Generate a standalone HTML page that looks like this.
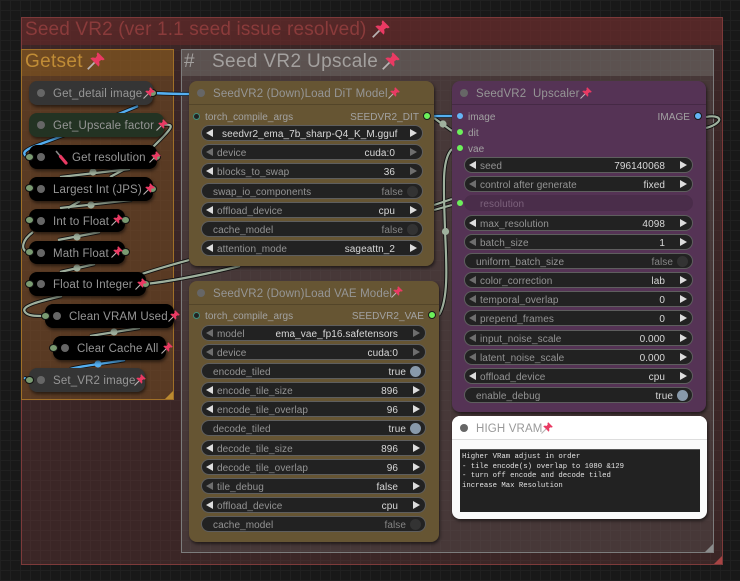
<!DOCTYPE html>
<html><head><meta charset="utf-8"><style>
html,body{margin:0;padding:0;background:#181818}
#p{position:relative;width:740px;height:581px;overflow:hidden;font-family:"Liberation Sans",sans-serif;background-color:#181818;background-image:linear-gradient(#202020 1px,transparent 1px),linear-gradient(90deg,#202020 1px,transparent 1px);background-size:10px 10px}
.a{position:absolute;box-sizing:border-box;white-space:pre}
.gt{position:absolute;font-size:19px;line-height:24px;white-space:pre}
.n{position:absolute;box-sizing:border-box;border-radius:8px;box-shadow:1px 2px 3px rgba(0,0,0,.55)}
.h{position:absolute;left:0;right:0;top:0;height:24px;border-bottom:1px solid rgba(0,0,0,.18);box-sizing:border-box}
.t{position:absolute;font-size:11.5px;line-height:14px;color:#969696;white-space:pre;letter-spacing:.15px;margin-top:1px}
.d{position:absolute;width:8px;height:8px;border-radius:50%;background:#666}
.s{position:absolute;width:9px;height:8px;border-radius:50%;background:#7a9b72;border:1px solid #111;box-sizing:border-box;z-index:5}
.o{position:absolute;width:8px;height:8px;border-radius:50%;box-sizing:border-box;border:1px solid #1a1a1a;z-index:5}
.lb{position:absolute;font-size:10px;line-height:13px;color:#a2a2a2;white-space:pre;letter-spacing:.05px;margin-top:1px}
.c{position:absolute;height:0;top:0}
.w{position:absolute;left:0;right:0;height:16px;box-sizing:border-box;border:1px solid #5e5e5e;border-radius:8px;background:#222;font-size:10px;line-height:15px;letter-spacing:.08px}
.w b{position:absolute;left:15px;top:1px;font-weight:normal;color:#949494;white-space:pre}
.w.g b{left:11px}
.w u{position:absolute;right:27px;top:1px;text-decoration:none;color:#d8d8d8;white-space:pre}
.w.g u{right:19px;color:#d8d8d8}
.w.g.f u{color:#858585}
.w i{position:absolute;top:3px;width:0;height:0;border-top:4px solid transparent;border-bottom:4px solid transparent}
.w i.l{left:4px;border-right:7px solid #ddd}
.w i.r{right:5px;border-left:7px solid #ddd}
.w i.l.m{border-right-color:#6e6e6e}
.w i.r.m{border-left-color:#6e6e6e}
.w em{position:absolute;right:4.5px;top:1.5px;width:11px;height:11px;border-radius:50%;background:#89a}
.w.f em{background:#333}
.pin{position:absolute;z-index:6}
</style></head><body><div id="p">
<svg width="0" height="0" style="position:absolute"><symbol id="pn" viewBox="0 0 24 24"><path d="M1 23L10 14" stroke="#b9b3b3" stroke-width="2.2" fill="none"/><path d="M14.500 .5C13 1.500 12.500 3.500 13.500 5L11 8C9 7 6.500 7 4.500 8.500L15.500 19.500C17 17.500 17 15 16 13L19 10.500C20.500 11.500 22.500 11 23.500 9.500Z" fill="#e93a63"/></symbol></svg>

<!-- groups -->
<div class="a" style="left:21px;top:17px;width:702px;height:548px;background:rgba(110,60,60,.42);border:1px solid #7d3a3a"></div>
<div class="a" style="left:22px;top:18px;width:700px;height:27px;background:rgba(110,40,40,.5)"></div>
<div class="gt" style="left:25px;top:18px;color:#8a3b3b;letter-spacing:.15px">Seed VR2 (ver 1.1 seed issue resolved)</div>
<svg class="pin" style="left:372px;top:20px" width="18" height="18"><use href="#pn"/></svg>
<div class="a" style="left:714px;top:556px;width:0;height:0;border-left:8px solid transparent;border-bottom:8px solid #a84444"></div>

<div class="a" style="left:21px;top:49px;width:153px;height:351px;background:rgba(130,85,30,.42);border:1px solid #a07028"></div>
<div class="a" style="left:22px;top:50px;width:151px;height:26px;background:rgba(160,105,30,.32)"></div>
<div class="gt" style="left:25px;top:50px;color:#c08c36;letter-spacing:.3px">Getset</div>
<svg class="pin" style="left:87px;top:52px" width="18" height="18"><use href="#pn"/></svg>
<div class="a" style="left:165px;top:391px;width:0;height:0;border-left:8px solid transparent;border-bottom:8px solid #bb8a30"></div>

<div class="a" style="left:181px;top:49px;width:533px;height:504px;background:rgba(100,100,100,.3);border:1px solid #7c7c7c"></div>
<div class="a" style="left:182px;top:50px;width:531px;height:26px;background:rgba(125,125,120,.38)"></div>
<div class="gt" style="left:184px;top:50px;color:#a3a09e;letter-spacing:.1px">#</div>
<div class="gt" style="left:212px;top:50px;color:#a3a09e;letter-spacing:.35px">Seed VR2 Upscale</div>
<svg class="pin" style="left:382px;top:52px" width="18" height="18"><use href="#pn"/></svg>
<div class="a" style="left:705px;top:544px;width:0;height:0;border-left:8px solid transparent;border-bottom:8px solid #8c8c8c"></div>

<!-- wires -->
<svg class="a" style="left:0;top:0" width="740" height="581" fill="none">
<g stroke="#111" stroke-width="4">
<path d="M152 93C175 94 175 94 189 94"/>
<path d="M138 106C100 122 60 137 35 146C25 150 22 153 26 156"/>
<path d="M70 369C85 365 110 363 125 360"/><path d="M28 379L24 378"/>
<path d="M434 116H452"/>
<path d="M434 118L452 131"/>
<path d="M163 125C178 123 170 130 150 150"/>
<path d="M130 169L60 177"/><path d="M125 169L110 177"/>
<path d="M132 200L60 208"/><path d="M80 201L68 208"/>
<path d="M100 232L58 240"/><path d="M33 232C22 240 20 250 28 252"/>
<path d="M95 264L60 272"/>
<path d="M142 274C160 268 175 264 189 260M145 284C175 281 215 272 240 266"/>
<path d="M434 205L452 199M434 210L452 205"/>
<path d="M62 296C40 301 20 306 25 312C28 316 35 316 45 316"/>
<path d="M140 328L90 336"/>
<path d="M439 315C448 300 447 270 445 231C444 190 441 160 452 149"/>
<path d="M706 117C716 115 722 118 718 122C715 125 710 127 706 128"/>
</g>
<g stroke="#9fb09d" stroke-width="2.2">
<path d="M434 118L452 131"/>
<path d="M163 125C178 123 170 130 150 150"/>
<path d="M130 169L60 177"/><path d="M125 169L110 177"/>
<path d="M132 200L60 208"/><path d="M80 201L68 208"/>
<path d="M100 232L58 240"/><path d="M33 232C22 240 20 250 28 252"/>
<path d="M95 264L60 272"/>
<path d="M142 274C160 268 175 264 189 260M145 284C175 281 215 272 240 266"/>
<path d="M434 205L452 199M434 210L452 205"/>
<path d="M62 296C40 301 20 306 25 312C28 316 35 316 45 316"/>
<path d="M140 328L90 336"/>
<path d="M439 315C448 300 447 270 445 231C444 190 441 160 452 149"/>
<path d="M706 117C716 115 722 118 718 122C715 125 710 127 706 128"/>
</g>
<g stroke="#55b0f2" stroke-width="2.4">
<path d="M152 93C175 94 175 94 189 94"/>
<path d="M138 106C100 122 60 137 35 146C25 150 22 153 26 156"/>
<path d="M70 369C85 365 110 363 125 360"/><path d="M28 379L24 378"/>
<path d="M434 116H452"/>
</g>
<g fill="#9fb09d"><circle cx="93" cy="172" r="3.6"/><circle cx="91" cy="205" r="3.6"/><circle cx="77" cy="237" r="3.6"/><circle cx="77" cy="268" r="3.6"/><circle cx="114" cy="332" r="3.6"/><circle cx="443" cy="124" r="3.6"/><circle cx="445.500" cy="231.500" r="3.6"/></g>
<circle cx="98" cy="364" r="3.6" fill="#55b0f2"/>
</svg>

<!-- left nodes -->
<div class="n" style="left:29px;top:81px;width:124px;height:24px;background:#353535"><div class="d" style="left:8px;top:8px"></div><div class="t" style="left:24px;top:5px">Get_detail image</div></div>
<svg class="pin" style="left:143px;top:87px" width="12" height="12"><use href="#pn"/></svg><div class="s" style="left:148px;top:89px"></div>

<div class="n" style="left:29px;top:113px;width:135px;height:24px;background:#233323"><div class="d" style="left:8px;top:8px"></div><div class="t" style="left:24px;top:5px">Get_Upscale factor</div></div>
<svg class="pin" style="left:156px;top:119px" width="12" height="12"><use href="#pn"/></svg>

<div class="n" style="left:29px;top:145px;width:128px;height:24px;background:#000"><div class="d" style="left:8px;top:8px"></div><div class="t" style="left:43px;top:5px">Get resolution</div></div>
<svg class="a" style="left:55px;top:150px;z-index:4" width="13" height="15"><path d="M1 1L6 7" stroke="#888" stroke-width="1.6"/><path d="M5.500 6.500L11 13" stroke="#e93a63" stroke-width="3.2" stroke-linecap="round"/></svg>
<svg class="pin" style="left:149px;top:151px" width="12" height="12"><use href="#pn"/></svg><div class="s" style="left:25px;top:153px"></div><div class="s" style="left:152px;top:153px"></div>

<div class="n" style="left:29px;top:177px;width:124px;height:24px;background:#000"><div class="d" style="left:8px;top:8px"></div><div class="t" style="left:24px;top:5px">Largest Int (JPS)</div></div>
<svg class="pin" style="left:143px;top:183px" width="12" height="12"><use href="#pn"/></svg><div class="s" style="left:25px;top:184px"></div><div class="s" style="left:148px;top:185px"></div>

<div class="n" style="left:29px;top:209px;width:96px;height:23px;background:#000"><div class="d" style="left:8px;top:8px"></div><div class="t" style="left:24px;top:5px">Int to Float</div></div>
<svg class="pin" style="left:111px;top:214px" width="12" height="12"><use href="#pn"/></svg><div class="s" style="left:25px;top:216px"></div><div class="s" style="left:121px;top:216px"></div>

<div class="n" style="left:29px;top:241px;width:96px;height:23px;background:#000"><div class="d" style="left:8px;top:8px"></div><div class="t" style="left:24px;top:5px">Math Float</div></div>
<svg class="pin" style="left:111px;top:246px" width="12" height="12"><use href="#pn"/></svg><div class="s" style="left:25px;top:248px"></div><div class="s" style="left:121px;top:248px"></div>

<div class="n" style="left:29px;top:272px;width:117px;height:24px;background:#000"><div class="d" style="left:8px;top:8px"></div><div class="t" style="left:24px;top:5px">Float to Integer</div></div>
<svg class="pin" style="left:135px;top:278px" width="12" height="12"><use href="#pn"/></svg><div class="s" style="left:25px;top:280px"></div><div class="s" style="left:141px;top:280px"></div>

<div class="n" style="left:45px;top:304px;width:129px;height:24px;background:#000"><div class="d" style="left:8px;top:8px"></div><div class="t" style="left:24px;top:5px">Clean VRAM Used</div></div>
<svg class="pin" style="left:168px;top:310px" width="12" height="12"><use href="#pn"/></svg><div class="s" style="left:41px;top:312px"></div>

<div class="n" style="left:53px;top:336px;width:113px;height:24px;background:#000"><div class="d" style="left:8px;top:8px"></div><div class="t" style="left:24px;top:5px">Clear Cache All</div></div>
<svg class="pin" style="left:161px;top:342px" width="12" height="12"><use href="#pn"/></svg><div class="s" style="left:49px;top:344px"></div>

<div class="n" style="left:29px;top:368px;width:116px;height:24px;background:#353535"><div class="d" style="left:8px;top:8px"></div><div class="t" style="left:24px;top:5px">Set_VR2 image</div></div>
<svg class="pin" style="left:134px;top:374px" width="12" height="12"><use href="#pn"/></svg><div class="s" style="left:25px;top:376px"></div>

<!-- DiT node -->
<div class="n" style="left:189px;top:81px;width:245px;height:185px;background:#665533"><div class="h"></div><div class="d" style="left:8px;top:8px"></div><div class="t" style="left:24px;top:5px">SeedVR2 (Down)Load DiT Model</div></div>
<svg class="pin" style="left:388px;top:87px" width="12" height="12"><use href="#pn"/></svg>
<div class="o" style="left:193px;top:113px;background:#222;border:1.5px solid #3e8f7d;width:7px;height:7px"></div>
<div class="lb" style="left:205px;top:110px">torch_compile_args</div>
<div class="lb" style="right:321px;top:110px">SEEDVR2_DIT</div>
<div class="o" style="left:423px;top:112px;background:#6cf05a"></div>
<div class="c" style="left:201px;width:222px">
<div class="w" style="top:125px"><i class="l"></i><u style="left:20px;right:auto">seedvr2_ema_7b_sharp-Q4_K_M.gguf</u><i class="r"></i></div>
<div class="w" style="top:144px"><i class="l m"></i><b>device</b><u>cuda:0</u><i class="r m"></i></div>
<div class="w" style="top:163px"><i class="l"></i><b>blocks_to_swap</b><u>36</u><i class="r m"></i></div>
<div class="w g f" style="top:183px"><b>swap_io_components</b><u>false</u><em></em></div>
<div class="w" style="top:202px"><i class="l"></i><b>offload_device</b><u>cpu</u><i class="r"></i></div>
<div class="w g f" style="top:221px"><b>cache_model</b><u>false</u><em></em></div>
<div class="w" style="top:240px"><i class="l"></i><b>attention_mode</b><u>sageattn_2</u><i class="r"></i></div>
</div>

<!-- VAE node -->
<div class="n" style="left:189px;top:281px;width:250px;height:261px;background:#665533"><div class="h"></div><div class="d" style="left:8px;top:8px"></div><div class="t" style="left:24px;top:5px">SeedVR2 (Down)Load VAE Model</div></div>
<svg class="pin" style="left:391px;top:286px" width="12" height="12"><use href="#pn"/></svg>
<div class="o" style="left:193px;top:312px;background:#222;border:1.5px solid #3e8f7d;width:7px;height:7px"></div>
<div class="lb" style="left:205px;top:309px">torch_compile_args</div>
<div class="lb" style="right:316px;top:309px">SEEDVR2_VAE</div>
<div class="o" style="left:428px;top:311px;background:#6cf05a"></div>
<div class="c" style="left:201px;width:225px">
<div class="w" style="top:325px"><i class="l m"></i><b>model</b><u>ema_vae_fp16.safetensors</u><i class="r m"></i></div>
<div class="w" style="top:344px"><i class="l m"></i><b>device</b><u>cuda:0</u><i class="r m"></i></div>
<div class="w g" style="top:363px"><b>encode_tiled</b><u>true</u><em></em></div>
<div class="w" style="top:382px"><i class="l"></i><b>encode_tile_size</b><u>896</u><i class="r"></i></div>
<div class="w" style="top:401px"><i class="l"></i><b>encode_tile_overlap</b><u>96</u><i class="r"></i></div>
<div class="w g" style="top:420px"><b>decode_tiled</b><u>true</u><em></em></div>
<div class="w" style="top:440px"><i class="l"></i><b>decode_tile_size</b><u>896</u><i class="r"></i></div>
<div class="w" style="top:459px"><i class="l"></i><b>decode_tile_overlap</b><u>96</u><i class="r"></i></div>
<div class="w" style="top:478px"><i class="l m"></i><b>tile_debug</b><u>false</u><i class="r"></i></div>
<div class="w" style="top:497px"><i class="l"></i><b>offload_device</b><u>cpu</u><i class="r"></i></div>
<div class="w g f" style="top:516px"><b>cache_model</b><u>false</u><em></em></div>
</div>

<!-- Upscaler node -->
<div class="n" style="left:452px;top:81px;width:254px;height:331px;background:#553355"><div class="h"></div><div class="d" style="left:8px;top:8px"></div><div class="t" style="left:24px;top:5px">SeedVR2  Upscaler</div></div>
<svg class="pin" style="left:580px;top:87px" width="12" height="12"><use href="#pn"/></svg>
<div class="o" style="left:456px;top:112px;background:#64b5f6;border-color:#553355"></div>
<div class="lb" style="left:468px;top:110px">image</div>
<div class="o" style="left:456px;top:128px;background:#6cf05a;border-color:#553355"></div>
<div class="lb" style="left:468px;top:126px">dit</div>
<div class="o" style="left:456px;top:144px;background:#6cf05a;border-color:#553355"></div>
<div class="lb" style="left:468px;top:142px">vae</div>
<div class="lb" style="right:50px;top:110px">IMAGE</div>
<div class="o" style="left:694px;top:112px;background:#64b5f6"></div>
<div class="o" style="left:456px;top:199px;background:#6cf05a;border-color:#553355"></div>
<div class="c" style="left:464px;width:229px">
<div class="w" style="top:157px"><i class="l"></i><b>seed</b><u>796140068</u><i class="r"></i></div>
<div class="w" style="top:176px"><i class="l m"></i><b>control after generate</b><u>fixed</u><i class="r"></i></div>
<div class="w" style="top:195px;background:#4a2d4a;border-color:#4a2d4a"><b style="color:#7c627c">resolution</b></div>
<div class="w" style="top:215px"><i class="l"></i><b>max_resolution</b><u>4098</u><i class="r"></i></div>
<div class="w" style="top:234px"><i class="l m"></i><b>batch_size</b><u>1</u><i class="r"></i></div>
<div class="w g f" style="top:253px"><b>uniform_batch_size</b><u>false</u><em></em></div>
<div class="w" style="top:272px"><i class="l m"></i><b>color_correction</b><u>lab</u><i class="r"></i></div>
<div class="w" style="top:291px"><i class="l m"></i><b>temporal_overlap</b><u>0</u><i class="r"></i></div>
<div class="w" style="top:310px"><i class="l m"></i><b>prepend_frames</b><u>0</u><i class="r"></i></div>
<div class="w" style="top:330px"><i class="l m"></i><b>input_noise_scale</b><u>0.000</u><i class="r"></i></div>
<div class="w" style="top:349px"><i class="l m"></i><b>latent_noise_scale</b><u>0.000</u><i class="r"></i></div>
<div class="w" style="top:368px"><i class="l"></i><b>offload_device</b><u>cpu</u><i class="r"></i></div>
<div class="w g" style="top:387px"><b>enable_debug</b><u>true</u><em></em></div>
</div>

<!-- Note node -->
<div class="n" style="left:452px;top:416px;width:255px;height:103px;background:#fafafa"><div class="h" style="background:#fff;border-radius:8px 8px 0 0;border-bottom:1px solid #ddd"></div><div class="d" style="left:8px;top:8px;background:#666"></div><div class="t" style="left:24px;top:5px;color:#999">HIGH VRAM</div></div>
<svg class="pin" style="left:541px;top:422px" width="12" height="12"><use href="#pn"/></svg>
<div class="a" style="left:460px;top:449px;width:240px;height:63px;background:#222;border-top:1px solid #555;padding:3px 2px;font:7.3px/9.6px 'Liberation Mono',monospace;color:#e2e2e2">Higher VRam adjust in order
- tile encode(s) overlap to 1080 &amp;129
- turn off encode and decode tiled
increase Max Resolution</div>
</div></body></html>
